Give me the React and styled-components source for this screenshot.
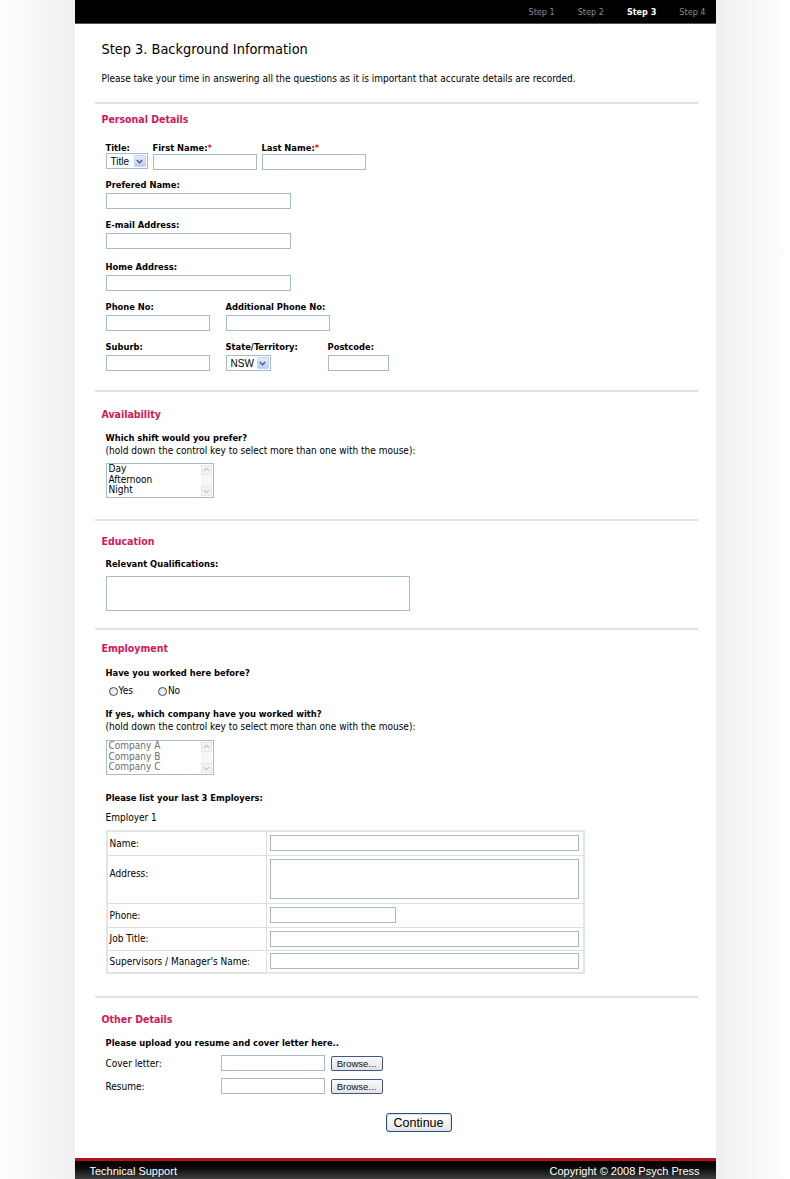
import React from "react"
import styled, { createGlobalStyle } from "styled-components"

const GlobalStyle = createGlobalStyle`
  body {
    margin: 0;
    background: linear-gradient(to right, #ffffff 0, #efefef 74px, #efefef 716px, #ffffff 790px);
    font-family: "DejaVu Sans Condensed", "DejaVu Sans", Verdana, sans-serif;
    font-stretch: condensed;
    color: #000;
  }
`

const FONT = `"DejaVu Sans Condensed", "DejaVu Sans", Verdana, sans-serif`

const Page = styled.div`
  width: 641px;
  margin: 0 auto;
  background: #fff;
`

const TopBar = styled.div`
  height: 24px;
  background: #000;
  border-bottom: 1px solid #555;
  box-sizing: border-box;
  display: flex;
  justify-content: flex-end;
  align-items: center;
  padding-right: 10px;
  gap: 23px;
`

const StepLink = styled.span`
  font-family: ${FONT};
  font-size: 9px;
  color: ${p => (p.$active ? "#fff" : "#8c8c8c")};
  font-weight: ${p => (p.$active ? "bold" : "normal")};
`

const Content = styled.div`
  padding: 0 18px 26px 20px;
`

const Title = styled.h1`
  margin: 0;
  padding: 18px 0 0 7px;
  font-size: 14.4px;
  line-height: 14px;
  font-weight: normal;
`

const Intro = styled.p`
  margin: 17px 0 17px 7px;
  font-size: 10px;
  line-height: 12px;
`

const Section = styled.div`
  border-top: 2px solid #e2e2e2;
  padding-top: ${p => p.$top}px;
  padding-bottom: ${p => p.$bottom}px;
`

const Heading = styled.h2`
  margin: 0 0 0 7px;
  font-size: 10.5px;
  line-height: 14px;
  font-weight: bold;
  color: #d4175a;
`

const Body = styled.div`
  padding-left: 11px;
`

const Row = styled.div`
  display: flex;
  gap: ${p => p.$gap || 5}px;
  margin-top: ${p => p.$mt || 0}px;
`

const Field = styled.div`
  display: flex;
  flex-direction: column;
  margin-top: ${p => p.$mt || 0}px;
  width: ${p => (p.$w ? p.$w + "px" : "auto")};
`

const Label = styled.div`
  font-size: 9.3px;
  line-height: 11px;
  font-weight: bold;
  margin-bottom: ${p => p.$mb ?? 3}px;
`

const Req = styled.span`
  color: #e0202a;
`

const Note = styled.div`
  font-size: ${p => (p.$bold ? 9.3 : 10)}px;
  line-height: 13px;
  margin-top: ${p => p.$mt || 0}px;
  font-weight: ${p => (p.$bold ? "bold" : "normal")};
`

const TextInput = styled.input`
  display: block;
  box-sizing: border-box;
  width: ${p => p.$w}px;
  height: 16px;
  margin: 0;
  padding: 0 2px;
  border: 1px solid #a8bad0;
  background: #fff;
  font-family: ${FONT};
  font-size: 9px;
  outline: none;
`

const TextArea = styled.textarea`
  display: block;
  box-sizing: border-box;
  width: ${p => p.$w}px;
  height: ${p => p.$h}px;
  margin: 0;
  padding: 2px;
  border: 1px solid #a8bad0;
  resize: none;
  background: #fff;
  outline: none;
`

const SelectBox = styled.div`
  box-sizing: border-box;
  width: ${p => p.$w}px;
  height: 16px;
  border: 1px solid #a8bad0;
  display: flex;
  align-items: center;
  justify-content: space-between;
  padding: 0 1px 0 4px;
  font-family: "Liberation Sans", Arial, sans-serif;
  font-size: 10px;
  background: #fff;
`

const ArrowBox = styled.span`
  width: 12px;
  height: 12px;
  box-sizing: border-box;
  border: 1px solid #c3d3f4;
  border-radius: 1px;
  background: linear-gradient(#e4ecfd, #b9cdf5);
  display: flex;
  align-items: center;
  justify-content: center;
`

const Chevron = ({ color = "#4d6185" }) => (
  <svg width="7" height="5" viewBox="0 0 7 5">
    <path d="M0.8 1 L3.5 3.7 L6.2 1" fill="none" stroke={color} strokeWidth="1.5" />
  </svg>
)

const Select = ({ value, w }) => (
  <SelectBox $w={w}>
    {value}
    <ArrowBox>
      <Chevron />
    </ArrowBox>
  </SelectBox>
)

const ListBox = styled.div`
  box-sizing: border-box;
  width: 108px;
  height: 35px;
  border: 1px solid #a8bad0;
  display: flex;
  margin-top: ${p => p.$mt || 0}px;
  background: #fff;
`

const ListItems = styled.div`
  flex: 1;
  padding: 0 0 0 2px;
  font-size: 10px;
  line-height: 10.5px;
  color: ${p => (p.$muted ? "#6e6e6e" : "#000")};
`

const ScrollTrack = styled.div`
  width: 11px;
  margin: 1px;
  display: flex;
  flex-direction: column;
  justify-content: space-between;
  background: #f7f7f5;
`

const ScrollBtn = styled.span`
  height: 10px;
  border: 1px solid #e4e8ee;
  box-sizing: border-box;
  background: #f2f4f7;
  display: flex;
  align-items: center;
  justify-content: center;
  transform: ${p => (p.$up ? "rotate(180deg)" : "none")};
`

const List = ({ items, muted, mt }) => (
  <ListBox $mt={mt}>
    <ListItems $muted={muted}>
      {items.map(i => (
        <div key={i}>{i}</div>
      ))}
    </ListItems>
    <ScrollTrack>
      <ScrollBtn $up>
        <Chevron color="#c4cbd6" />
      </ScrollBtn>
      <ScrollBtn>
        <Chevron color="#c4cbd6" />
      </ScrollBtn>
    </ScrollTrack>
  </ListBox>
)

const RadioRow = styled.div`
  display: flex;
  gap: 25px;
  margin-top: ${p => p.$mt}px;
  padding-left: 3px;
`

const RadioOpt = styled.label`
  display: flex;
  align-items: center;
  gap: 1px;
  font-size: 10px;
  line-height: 12px;
`

const Circle = styled.span`
  width: 9px;
  height: 9px;
  box-sizing: border-box;
  border-radius: 50%;
  border: 1px solid #2f4a6e;
  background: linear-gradient(135deg, #dcdcd6, #fff);
`

const EmpTable = styled.table`
  border-collapse: collapse;
  width: 479px;
  margin-top: 6px;
  border: 2px solid #e4e4e4;
`

const Td = styled.td`
  border: 1px solid #dedede;
  font-size: 10px;
  height: ${p => p.$h}px;
  padding: ${p => (p.$label ? "0 3px 0 2px" : "0 4px 0 3px")};
  width: ${p => (p.$label ? "160px" : "auto")};
  vertical-align: middle;
  box-sizing: border-box;
`

const LabelText = styled.span`
  display: block;
  padding-bottom: ${p => p.$pb || 0}px;
`

const UploadRow = styled.div`
  display: grid;
  grid-template-columns: 115px 104px auto;
  align-items: center;
  margin-top: ${p => p.$mt}px;
  font-size: 10px;
`

const BrowseButton = styled.button`
  margin-left: 6px;
  width: 52px;
  height: 15px;
  padding: 0;
  border: 1px solid #3d5a84;
  border-radius: 2px;
  background: linear-gradient(#fbfbfb, #e3e3e3);
  font-family: "Liberation Sans", Arial, sans-serif;
  font-size: 9.5px;
  color: #111;
`

const Actions = styled.div`
  display: flex;
  justify-content: center;
  padding-left: 45px;
  margin-top: 19px;
`

const ContinueButton = styled.button`
  width: 66px;
  height: 19px;
  padding: 0;
  border: 1px solid #2d4f7c;
  border-radius: 3px;
  box-shadow: inset 0 0 0 1px #d8e2ee;
  background: linear-gradient(#ffffff, #e6e6e6);
  font-family: "Liberation Sans", Arial, sans-serif;
  font-size: 12.5px;
  color: #000;
`

const Footer = styled.div`
  height: 22px;
  box-sizing: border-box;
  border-top: 3px solid #b4121b;
  background: linear-gradient(#000 0%, #0d0d0d 40%, #454545 100%);
  display: flex;
  justify-content: space-between;
  align-items: center;
  padding: 0 16px 0 15px;
  font-family: "Liberation Sans", Arial, sans-serif;
  font-size: 11px;
  color: #fff;
`

const employerRows = [
  { label: "Name:", h: 24, w: 309 },
  { label: "Address:", h: 48, w: 309, area: true },
  { label: "Phone:", h: 24, w: 126 },
  { label: "Job Title:", h: 23, w: 309 },
  { label: "Supervisors / Manager's Name:", h: 23, w: 309 },
]

export default function App() {
  return (
    <>
      <GlobalStyle />
      <Page>
        <TopBar>
          <StepLink>Step 1</StepLink>
          <StepLink>Step 2</StepLink>
          <StepLink $active>Step 3</StepLink>
          <StepLink>Step 4</StepLink>
        </TopBar>

        <Content>
          <Title>Step 3. Background Information</Title>
          <Intro>
            Please take your time in answering all the questions as it is important that accurate details are recorded.
          </Intro>

          <Section $top={8} $bottom={19}>
            <Heading>Personal Details</Heading>
            <Body>
              <Row $mt={16} $gap={5}>
                <Field $w={42}>
                  <Label $mb={0}>Title:</Label>
                  <Select value="Title" w={42} />
                </Field>
                <Field $w={104}>
                  <Label $mb={1}>First Name:<Req>*</Req></Label>
                  <TextInput $w={104} />
                </Field>
                <Field $w={104}>
                  <Label $mb={1}>Last Name:<Req>*</Req></Label>
                  <TextInput $w={104} />
                </Field>
              </Row>
              <Field $mt={9}>
                <Label>Prefered Name:</Label>
                <TextInput $w={185} />
              </Field>
              <Field $mt={10}>
                <Label>E-mail Address:</Label>
                <TextInput $w={185} />
              </Field>
              <Field $mt={12}>
                <Label>Home Address:</Label>
                <TextInput $w={185} />
              </Field>
              <Row $mt={10} $gap={16}>
                <Field $w={104}>
                  <Label>Phone No:</Label>
                  <TextInput $w={104} />
                </Field>
                <Field $w={104}>
                  <Label>Additional Phone No:</Label>
                  <TextInput $w={104} />
                </Field>
              </Row>
              <Row $mt={10} $gap={16}>
                <Field $w={104}>
                  <Label>Suburb:</Label>
                  <TextInput $w={104} />
                </Field>
                <Field $w={86}>
                  <Label>State/Territory:</Label>
                  <Select value="NSW" w={45} />
                </Field>
                <Field $w={61}>
                  <Label>Postcode:</Label>
                  <TextInput $w={61} />
                </Field>
              </Row>
            </Body>
          </Section>

          <Section $top={15} $bottom={21}>
            <Heading>Availability</Heading>
            <Body>
              <Note $mt={10} $bold>Which shift would you prefer?</Note>
              <Note>(hold down the control key to select more than one with the mouse):</Note>
              <List mt={6} items={["Day", "Afternoon", "Night"]} />
            </Body>
          </Section>

          <Section $top={13} $bottom={17}>
            <Heading>Education</Heading>
            <Body>
              <Note $mt={9} $bold>Relevant Qualifications:</Note>
              <Field $mt={6}>
                <TextArea $w={304} $h={35} />
              </Field>
            </Body>
          </Section>

          <Section $top={11} $bottom={22}>
            <Heading>Employment</Heading>
            <Body>
              <Note $mt={11} $bold>Have you worked here before?</Note>
              <RadioRow $mt={6}>
                <RadioOpt><Circle />Yes</RadioOpt>
                <RadioOpt><Circle />No</RadioOpt>
              </RadioRow>
              <Note $mt={10} $bold>If yes, which company have you worked with?</Note>
              <Note>(hold down the control key to select more than one with the mouse):</Note>
              <List mt={7} muted items={["Company A", "Company B", "Company C"]} />
              <Note $mt={16} $bold>Please list your last 3 Employers:</Note>
              <Note $mt={7}>Employer 1</Note>
              <EmpTable>
                <tbody>
                  {employerRows.map(r => (
                    <tr key={r.label}>
                      <Td $label $h={r.h}>
                        <LabelText $pb={r.area ? 12 : 0}>{r.label}</LabelText>
                      </Td>
                      <Td $h={r.h}>
                        {r.area ? <TextArea $w={r.w} $h={40} /> : <TextInput $w={r.w} />}
                      </Td>
                    </tr>
                  ))}
                </tbody>
              </EmpTable>
            </Body>
          </Section>

          <Section $top={14} $bottom={0}>
            <Heading>Other Details</Heading>
            <Body>
              <Note $mt={10} $bold>Please upload you resume and cover letter here..</Note>
              <UploadRow $mt={6}>
                <span>Cover letter:</span>
                <TextInput $w={104} />
                <BrowseButton>Browse...</BrowseButton>
              </UploadRow>
              <UploadRow $mt={7}>
                <span>Resume:</span>
                <TextInput $w={104} />
                <BrowseButton>Browse...</BrowseButton>
              </UploadRow>
            </Body>
            <Actions>
              <ContinueButton>Continue</ContinueButton>
            </Actions>
          </Section>
        </Content>

        <Footer>
          <span>Technical Support</span>
          <span>Copyright © 2008 Psych Press</span>
        </Footer>
      </Page>
    </>
  )
}
